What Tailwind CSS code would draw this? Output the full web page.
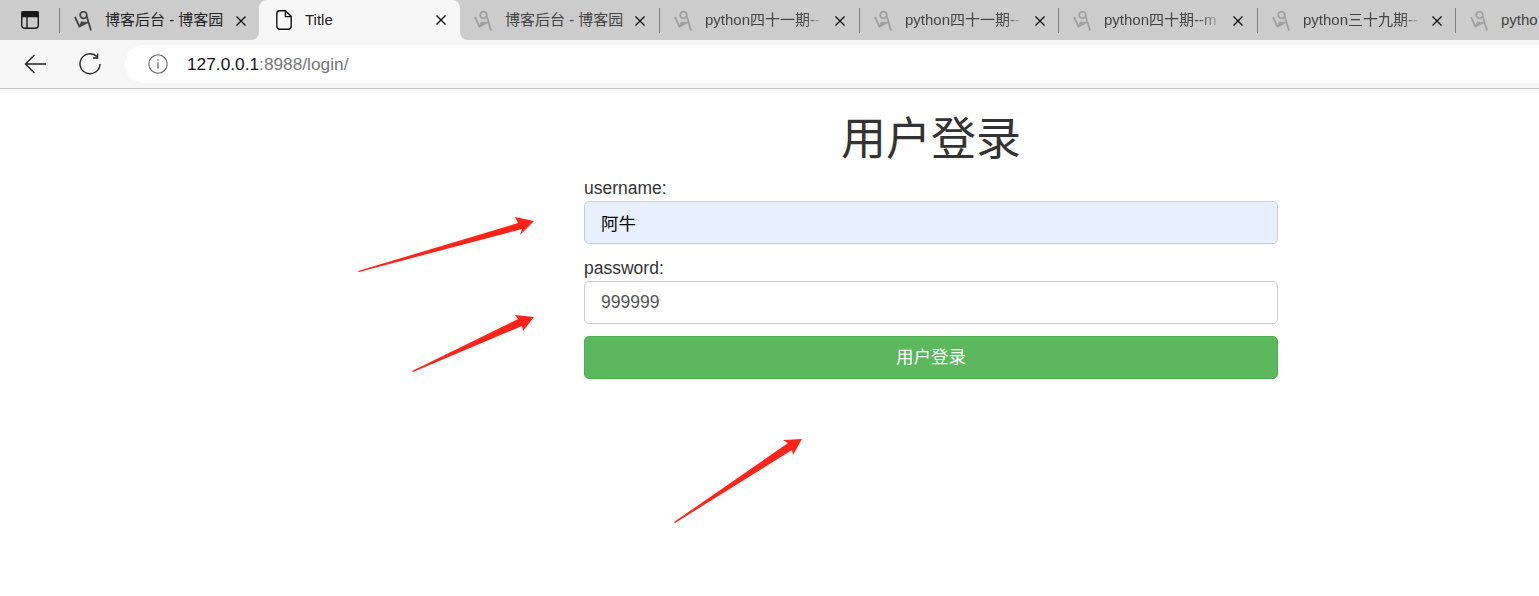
<!DOCTYPE html>
<html lang="zh">
<head>
<meta charset="utf-8">
<title>Title</title>
<script src="https://cdn.jsdelivr.net/npm/@tailwindcss/browser@4"></script>
</head>
<body class="relative h-[596px] w-[1539px] overflow-hidden bg-white font-['Liberation_Sans','Noto_Sans_CJK_SC',sans-serif] text-[#333333]">

<header class="h-[89px] w-full overflow-hidden border-b border-[#c6c6c6] bg-[#f7f7f7]">
  <div class="flex h-10 items-stretch overflow-hidden text-[15px]">
    <div class="flex w-[259px] shrink-0 items-stretch rounded-br-lg bg-[#cccccc]">
      <div class="flex w-[59px] shrink-0 items-center justify-center">
        <svg class="ml-[1px] h-[18px] w-[18px]" viewBox="0 0 18 18" fill="none" stroke="#1a1a1a" stroke-width="1.4"><rect x=".7" y=".7" width="16.6" height="16.6" rx="3"/><path d="M1 1h16v4.6H1z" fill="#1a1a1a"/><path d="M6 5.6V17"/></svg>
      </div>
      <div class="mt-2 mb-[7px] flex w-[200px] shrink-0 items-center border-l border-l-[#808080] pl-[14px] text-[#222222]">
        <svg class="h-5 w-[18px] shrink-0" viewBox="0 0 18 20" fill="none" stroke="#444" stroke-width="1.8"><circle cx="9.5" cy="4" r="3.3"/><path d="M1 6l4.4 9.5 9-4.5M12.8 5.5L17 19.5"/><path d="M5 15.5l2-5 6 .5z" fill="#444" stroke="none"/></svg>
        <span class="ml-[13px] w-[122px] overflow-hidden whitespace-nowrap">博客后台 - 博客园</span>
        <svg class="ml-[8px] h-3 w-3 shrink-0" viewBox="0 0 12 12" stroke="#111" stroke-width="1.4"><path d="M1.5 1.5l9 9M10.5 1.5l-9 9"/></svg>
      </div>
    </div>

    <div class="w-[201px] shrink-0 bg-[#cccccc]">
      <div class="flex h-10 items-center rounded-t-lg bg-[#f7f7f7] pl-[17px] text-[#222222]">
        <svg class="h-5 w-4 shrink-0" viewBox="0 0 16 20" fill="none" stroke="#111" stroke-width="1.4"><path d="M3.2.8h6.4l5.6 5.6v9.9a3 3 0 0 1-3 3H3.8a3 3 0 0 1-3-3V3.5A2.8 2.8 0 0 1 3.2.8zM9.4 1v5.6h5.6"/></svg>
        <span class="ml-[13px] w-[128px] overflow-hidden whitespace-nowrap">Title</span>
        <svg class="ml-[1.5px] h-3 w-3 shrink-0" viewBox="0 0 12 12" stroke="#111" stroke-width="1.4"><path d="M1.5 1.5l9 9M10.5 1.5l-9 9"/></svg>
      </div>
    </div>

    <div class="flex flex-1 items-stretch rounded-bl-lg bg-[#cccccc]">
      <div class="mt-2 mb-[7px] flex w-[199px] shrink-0 items-center pl-[14px] text-[#444444]">
        <svg class="h-5 w-[18px] shrink-0" viewBox="0 0 18 20" fill="none" stroke="#a0a0a0" stroke-width="1.8"><circle cx="9.5" cy="4" r="3.3"/><path d="M1 6l4.4 9.5 9-4.5M12.8 5.5L17 19.5"/><path d="M5 15.5l2-5 6 .5z" fill="#a0a0a0" stroke="none"/></svg>
        <span class="ml-[13px] w-[122px] overflow-hidden whitespace-nowrap">博客后台 - 博客园</span>
        <svg class="ml-[7px] h-3 w-3 shrink-0" viewBox="0 0 12 12" stroke="#111" stroke-width="1.4"><path d="M1.5 1.5l9 9M10.5 1.5l-9 9"/></svg>
      </div>

      <div class="mt-2 mb-[7px] flex w-[200px] shrink-0 items-center border-l border-l-[#808080] pl-[14px] text-[#444444]">
        <svg class="h-5 w-[18px] shrink-0" viewBox="0 0 18 20" fill="none" stroke="#a0a0a0" stroke-width="1.8"><circle cx="9.5" cy="4" r="3.3"/><path d="M1 6l4.4 9.5 9-4.5M12.8 5.5L17 19.5"/><path d="M5 15.5l2-5 6 .5z" fill="#a0a0a0" stroke="none"/></svg>
        <span class="ml-[13px] w-[119px] overflow-hidden whitespace-nowrap [mask-image:linear-gradient(to_right,black_85%,transparent)]">python四十一期--</span>
        <svg class="ml-[10px] h-3 w-3 shrink-0" viewBox="0 0 12 12" stroke="#111" stroke-width="1.4"><path d="M1.5 1.5l9 9M10.5 1.5l-9 9"/></svg>
      </div>

      <div class="mt-2 mb-[7px] flex w-[199px] shrink-0 items-center border-l border-l-[#808080] pl-[14px] text-[#444444]">
        <svg class="h-5 w-[18px] shrink-0" viewBox="0 0 18 20" fill="none" stroke="#a0a0a0" stroke-width="1.8"><circle cx="9.5" cy="4" r="3.3"/><path d="M1 6l4.4 9.5 9-4.5M12.8 5.5L17 19.5"/><path d="M5 15.5l2-5 6 .5z" fill="#a0a0a0" stroke="none"/></svg>
        <span class="ml-[13px] w-[119px] overflow-hidden whitespace-nowrap [mask-image:linear-gradient(to_right,black_85%,transparent)]">python四十一期--</span>
        <svg class="ml-[10px] h-3 w-3 shrink-0" viewBox="0 0 12 12" stroke="#111" stroke-width="1.4"><path d="M1.5 1.5l9 9M10.5 1.5l-9 9"/></svg>
      </div>

      <div class="mt-2 mb-[7px] flex w-[199px] shrink-0 items-center border-l border-l-[#808080] pl-[14px] text-[#444444]">
        <svg class="h-5 w-[18px] shrink-0" viewBox="0 0 18 20" fill="none" stroke="#a0a0a0" stroke-width="1.8"><circle cx="9.5" cy="4" r="3.3"/><path d="M1 6l4.4 9.5 9-4.5M12.8 5.5L17 19.5"/><path d="M5 15.5l2-5 6 .5z" fill="#a0a0a0" stroke="none"/></svg>
        <span class="ml-[13px] w-[119px] overflow-hidden whitespace-nowrap [mask-image:linear-gradient(to_right,black_80%,transparent)]">python四十期--m</span>
        <svg class="ml-[9px] h-3 w-3 shrink-0" viewBox="0 0 12 12" stroke="#111" stroke-width="1.4"><path d="M1.5 1.5l9 9M10.5 1.5l-9 9"/></svg>
      </div>

      <div class="mt-2 mb-[7px] flex w-[198px] shrink-0 items-center border-l border-l-[#808080] pl-[14px] text-[#444444]">
        <svg class="h-5 w-[18px] shrink-0" viewBox="0 0 18 20" fill="none" stroke="#a0a0a0" stroke-width="1.8"><circle cx="9.5" cy="4" r="3.3"/><path d="M1 6l4.4 9.5 9-4.5M12.8 5.5L17 19.5"/><path d="M5 15.5l2-5 6 .5z" fill="#a0a0a0" stroke="none"/></svg>
        <span class="ml-[13px] w-[119px] overflow-hidden whitespace-nowrap [mask-image:linear-gradient(to_right,black_85%,transparent)]">python三十九期--</span>
        <svg class="ml-[9px] h-3 w-3 shrink-0" viewBox="0 0 12 12" stroke="#111" stroke-width="1.4"><path d="M1.5 1.5l9 9M10.5 1.5l-9 9"/></svg>
      </div>

      <div class="mt-2 mb-[7px] flex min-w-0 flex-1 items-center overflow-hidden border-l border-l-[#808080] pl-[14px] text-[#444444]">
        <svg class="h-5 w-[18px] shrink-0" viewBox="0 0 18 20" fill="none" stroke="#a0a0a0" stroke-width="1.8"><circle cx="9.5" cy="4" r="3.3"/><path d="M1 6l4.4 9.5 9-4.5M12.8 5.5L17 19.5"/><path d="M5 15.5l2-5 6 .5z" fill="#a0a0a0" stroke="none"/></svg>
        <span class="ml-[13px] whitespace-nowrap">pytho</span>
      </div>
    </div>
  </div>

  <div class="flex h-12 items-center">
    <svg class="ml-[24px] h-5 w-[22px] shrink-0" viewBox="0 0 22 20" fill="none" stroke="#222" stroke-width="1.4"><path d="M22 10H1.5M10.5 1L1.5 10l9 9"/></svg>
    <svg class="ml-[33px] h-[22px] w-[22px] shrink-0" viewBox="0 0 22 22" fill="none" stroke="#222" stroke-width="1.4"><path d="M18 3.6A10 10 0 1 0 21 11"/><path d="M18.6 0.6V5H14"/></svg>
    <div class="ml-[24px] flex h-[38px] flex-1 items-center rounded-l-[19px] bg-white pl-[23px] text-[17.3px]">
      <svg class="h-5 w-5 shrink-0" viewBox="0 0 20 20" fill="none" stroke="#666" stroke-width="1.1"><circle cx="10" cy="10" r="9.2"/><path d="M10 8.6v6M10 5.2v1.6" stroke-width="1.3"/></svg>
      <span class="ml-[19px] mt-[2px] text-[#111111]">127.0.0.1<span class="text-[#767676]">:8988/login/</span></span>
    </div>
  </div>
</header>

<main class="ml-[584px] flex w-[694px] flex-col">
  <h1 class="mt-[21px] text-center text-[45px] font-normal leading-[60px]">用户登录</h1>
  <form class="mt-[7px] flex flex-col text-[17.5px]">
    <label class="h-[24px] leading-[22px]">username:</label>
    <input type="text" value="阿牛" class="h-[43px] rounded-[5px] border border-[#c9ced6] bg-[#e8f0fe] px-4 text-black">
    <label class="mt-[13px] h-[24px] leading-[23px]">password:</label>
    <input type="text" value="999999" class="h-[43px] rounded-[5px] border border-[#cccccc] bg-white px-4 text-[#555555]">
    <button type="button" class="mt-[12px] h-[43px] rounded-[5px] border border-[#4cae4c] bg-[#5cb85c] text-white">用户登录</button>
  </form>
</main>

<svg class="pointer-events-none absolute left-0 top-0" width="1539" height="596" fill="#ff2318">
  <path d="M358 271L518 223 515 217 534 221 520 235 522 229 359 272z"/>
  <path d="M412 371L518 319 515 315 534 317 523 331 522 326 413 372z"/>
  <path d="M674 522L788 443 783 440 802 439 793 455 792 450 675 523z"/>
</svg>
</body>
</html>
